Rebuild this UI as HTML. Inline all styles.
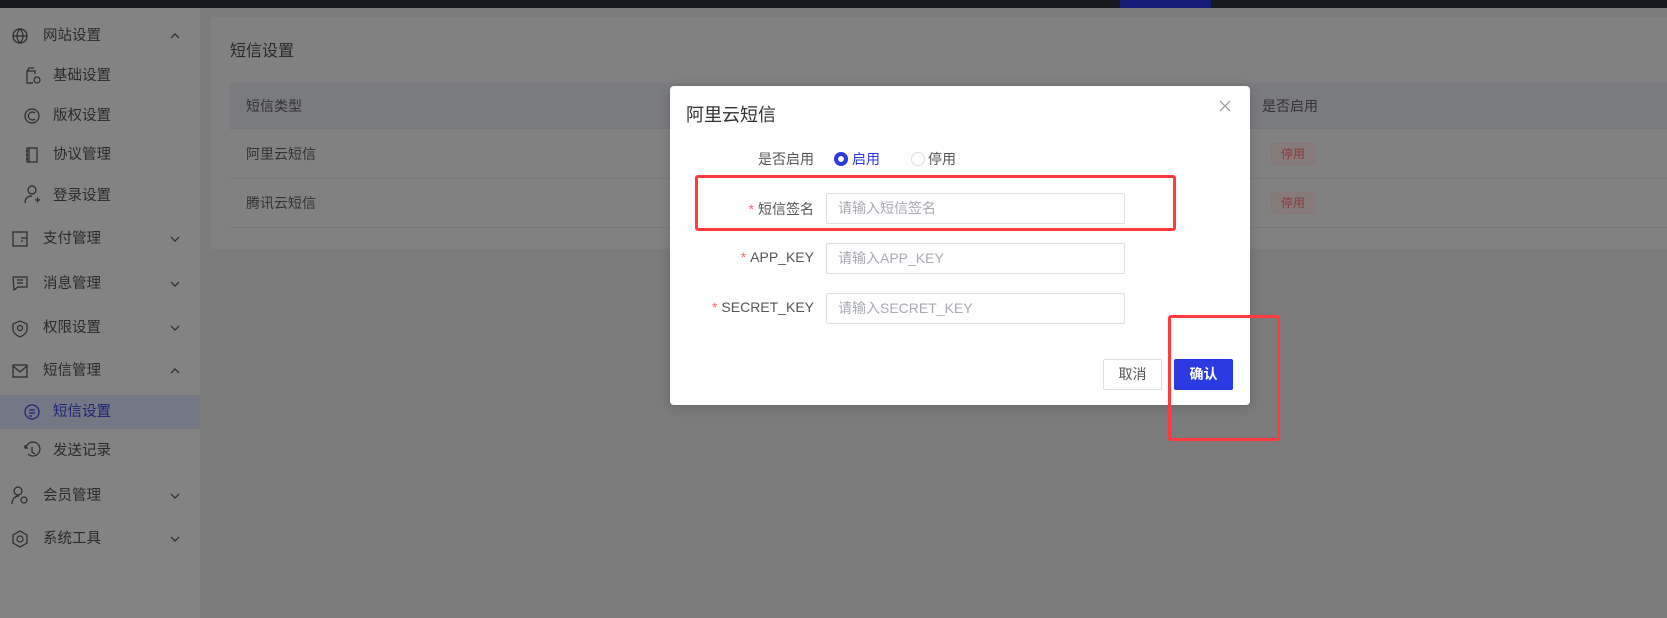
<!DOCTYPE html>
<html><head><meta charset="utf-8"><style>
*{margin:0;padding:0;box-sizing:border-box}
body{width:1667px;height:618px;overflow:hidden;background:#7b7b7b;font-family:"Liberation Sans","Noto Sans CJK SC",sans-serif;position:relative;color:#2a2a2a}
.top{position:absolute;left:0;top:0;width:1667px;height:8px;background:#15181d}
.top i{position:absolute;left:1120px;top:0;width:91px;height:8px;background:#161b78}
.side{position:absolute;left:0;top:8px;width:200px;height:610px;background:#838383}
.mi{position:absolute;left:0;width:200px;height:20px;font-size:14.5px;line-height:20px;color:#2a2a2a}
.mi span{position:absolute;left:43px}
.mi.sub span{left:53px}
.act{position:absolute;left:0;top:387px;width:200px;height:34px;background:#747784}
.card{position:absolute;left:211px;top:17px;width:1456px;height:232px;background:#818181}
.ct{position:absolute;left:19px;top:20px;font-size:16px;color:#2a2a2a}
.th{position:absolute;left:19px;top:66px;width:1437px;height:46px;background:#7a7b7e;border-bottom:1px solid #777}
.row{position:absolute;left:19px;width:1437px;height:49px;border-bottom:1px solid #787878}
.cell{position:absolute;left:16px;font-size:14px;color:#333;line-height:20px}
.tag{position:absolute;left:1041px;width:44px;height:22px;border:1px solid #8a7676;background:#857b7b;border-radius:3px;color:#8e3a3a;font-size:12px;text-align:center;line-height:20px}
.dlg{position:absolute;left:670px;top:86px;width:580px;height:319px;background:#fff;border-radius:4px;box-shadow:0 2px 12px rgba(0,0,0,.15)}
.dt{position:absolute;left:16px;top:15px;font-size:18px;color:#303133}
.lb{position:absolute;right:436px;font-size:14px;color:#555;text-align:right;white-space:nowrap}
.lb b{color:#f56c6c;font-weight:normal;margin-right:4px}
.inp{position:absolute;left:156px;width:299px;height:31px;border:1px solid #dcdfe6;border-radius:2px;font-size:14px;color:#a8abb2;padding-left:11px;line-height:29px}
.rd{position:absolute;top:66px;width:14px;height:14px;border-radius:50%;border:1px solid #dcdfe6}
.btn{position:absolute;top:273px;width:59px;height:31px;font-size:14px;text-align:center;line-height:31px;border-radius:2px}
.red{position:absolute;border:3px solid #ff3b3b;border-radius:3px}
</style></head><body>
<div class="top"><i></i></div>
<div class="side">
<div class="act"></div>
</div>
<svg style="position:absolute;left:0;top:0" width="200" height="618" fill="none" stroke="#2b2b2b" stroke-width="1.2">
<circle cx="20" cy="36" r="7"/><path d="M13 36h14M20 29c-4 4-4 10 0 14M20 29c4 4 4 10 0 14"/>
<path d="M171 38l4-4 4 4"/>
<path d="M27 71h8v3M27 71v12h6M27 71l2-3h5"/><circle cx="37" cy="80" r="3"/>
<circle cx="32" cy="116" r="7"/><path d="M35 113a4 4 0 1 0 0 6"/>
<path d="M27 148h10v14H27zM29 148v14M26 151h2M26 155h2M26 159h2"/>
<circle cx="32" cy="190" r="4"/><path d="M25 203c0-5 3-7 7-7M35 200h5M37.5 197.5v5"/>
<path d="M13 232h14v14H13zM21 238h6M21 241h2"/>
<path d="M171 237l4 4 4-4"/>
<path d="M13 277h14v10h-9l-4 3zM17 280h6M17 283h6"/>
<path d="M171 282l4 4 4-4"/>
<path d="M20 321l7 3v5c0 4-3 6-7 8-4-2-7-4-7-8v-5z"/><circle cx="20" cy="328" r="2.5"/>
<path d="M171 326l4 4 4-4"/>
<path d="M13 365h14v12H13zM13 366l7 6 7-6"/>
<path d="M171 373l4-4 4 4"/>
<circle cx="32" cy="412" r="7" stroke="#1e2377"/><path d="M29 410h6M29 413h6M29 416h3" stroke="#1e2377"/>
<path d="M26 448a7 7 0 1 1 2 6M32 447v5l3 2M25 445v3h3"/>
<circle cx="18" cy="491" r="4"/><path d="M12 504c0-5 3-8 7-8"/><circle cx="24" cy="500" r="3"/>
<path d="M171 494l4 4 4-4"/>
<path d="M20 531l7 4v8l-7 4-7-4v-8z"/><circle cx="20" cy="539" r="3"/>
<path d="M171 537l4 4 4-4"/>
</svg>
<div class="mi" style="top:26px"><span>网站设置</span></div>
<div class="mi sub" style="top:66px"><span>基础设置</span></div>
<div class="mi sub" style="top:106px"><span>版权设置</span></div>
<div class="mi sub" style="top:145px"><span>协议管理</span></div>
<div class="mi sub" style="top:186px"><span>登录设置</span></div>
<div class="mi" style="top:229px"><span>支付管理</span></div>
<div class="mi" style="top:274px"><span>消息管理</span></div>
<div class="mi" style="top:318px"><span>权限设置</span></div>
<div class="mi" style="top:361px"><span>短信管理</span></div>
<div class="mi sub" style="top:402px;color:#1e2377"><span>短信设置</span></div>
<div class="mi sub" style="top:441px"><span>发送记录</span></div>
<div class="mi" style="top:486px"><span>会员管理</span></div>
<div class="mi" style="top:529px"><span>系统工具</span></div>

<div class="card">
<div class="ct">短信设置</div>
<div class="th"><div class="cell" style="top:13px">短信类型</div><div class="cell" style="left:1032px;top:13px">是否启用</div></div>
<div class="row" style="top:113px"><div class="cell" style="top:14px">阿里云短信</div><div class="tag" style="top:13px">停用</div></div>
<div class="row" style="top:162px"><div class="cell" style="top:14px">腾讯云短信</div><div class="tag" style="top:13px">停用</div></div>
</div>

<div class="dlg">
<div class="dt">阿里云短信</div>
<svg style="position:absolute;left:549px;top:14px" width="12" height="12" stroke="#909399" stroke-width="1.2"><path d="M1 1l10 10M11 1L1 11"/></svg>
<div class="lb" style="top:63px">是否启用</div>
<div class="rd" style="left:164px;border:4px solid #2b39e0"></div>
<div style="position:absolute;left:182px;top:63px;font-size:14px;color:#2b39e0">启用</div>
<div class="rd" style="left:241px"></div>
<div style="position:absolute;left:258px;top:63px;font-size:14px;color:#555">停用</div>
<div class="lb" style="top:113px"><b>*</b>短信签名</div>
<div class="inp" style="top:107px">请输入短信签名</div>
<div class="lb" style="top:163px"><b>*</b>APP_KEY</div>
<div class="inp" style="top:157px">请输入APP_KEY</div>
<div class="lb" style="top:213px"><b>*</b>SECRET_KEY</div>
<div class="inp" style="top:207px">请输入SECRET_KEY</div>
<div class="btn" style="left:433px;border:1px solid #dcdfe6;color:#555;line-height:29px">取消</div>
<div class="btn" style="left:504px;background:#2b39e0;color:#fff;font-weight:bold">确认</div>
</div>
<div class="red" style="left:695px;top:175px;width:481px;height:56px"></div>
<div class="red" style="left:1168px;top:315px;width:112px;height:126px"></div>
</body></html>
